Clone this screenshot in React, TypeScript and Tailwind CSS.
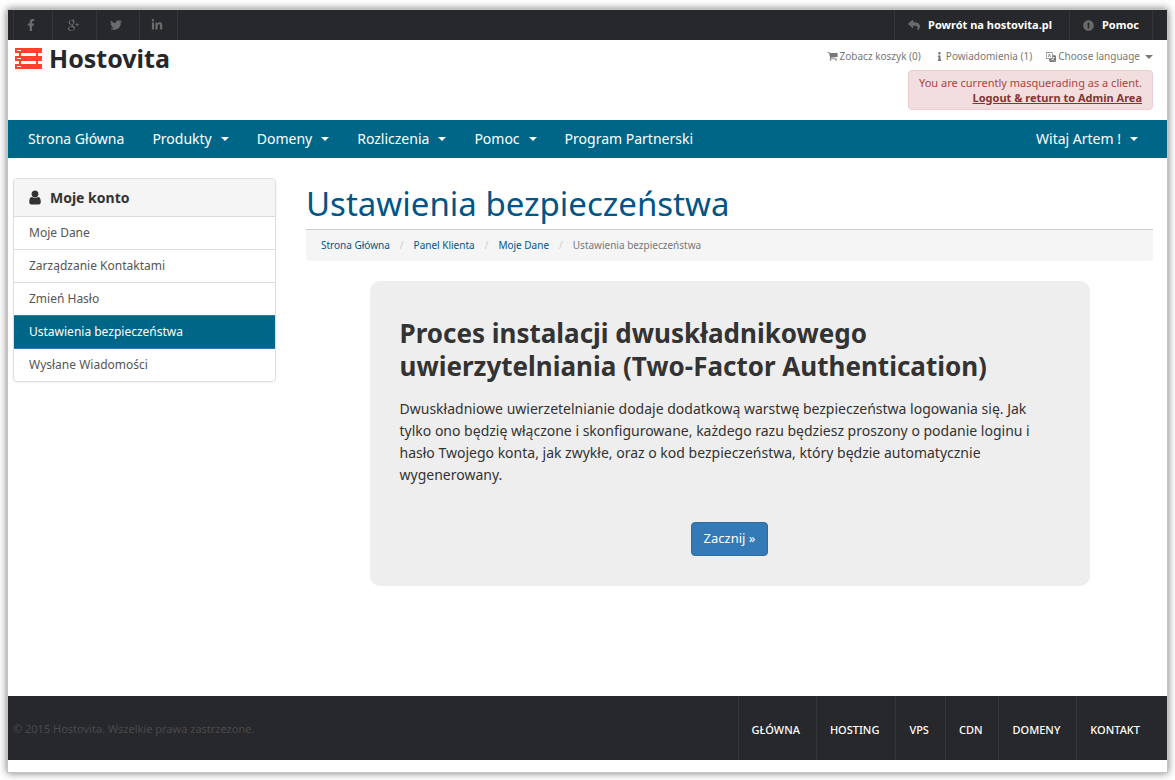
import type { ReactNode } from "react";
import { BsTranslate } from "react-icons/bs";
import {
  FaExclamationCircle,
  FaFacebookF,
  FaInfo,
  FaLinkedinIn,
  FaReply,
  FaTwitter,
} from "react-icons/fa";
import { TiSocialGooglePlus } from "react-icons/ti";

const SOCIAL = [
  { name: "Facebook", icon: <FaFacebookF size={12} />, width: "w-[39px]" },
  { name: "Google Plus", icon: <TiSocialGooglePlus size={18} />, width: "w-[44px]" },
  { name: "Twitter", icon: <FaTwitter size={12} />, width: "w-[43px]" },
  { name: "LinkedIn", icon: <FaLinkedinIn size={12} />, width: "w-[38px]" },
];

const NAV = [
  { label: "Strona Główna", menu: false },
  { label: "Produkty", menu: true },
  { label: "Domeny", menu: true },
  { label: "Rozliczenia", menu: true },
  { label: "Pomoc", menu: true },
  { label: "Program Partnerski", menu: false },
];

const ACCOUNT_LINKS = [
  "Moje Dane",
  "Zarządzanie Kontaktami",
  "Zmień Hasło",
  "Ustawienia bezpieczeństwa",
  "Wysłane Wiadomości",
];

const CRUMBS = ["Strona Główna", "Panel Klienta", "Moje Dane"];

const FOOTER_LINKS = ["Główna", "Hosting", "VPS", "CDN", "Domeny", "Kontakt"];

function Caret() {
  return (
    <span className="inline-block border-x-4 border-t-4 border-x-transparent border-t-current" />
  );
}

function UserIcon() {
  return (
    <svg width="12" height="15" viewBox="0 64 1280 1664" fill="currentColor" aria-hidden="true">
      <path d="M1280 1399q0 109-62.5 187t-150.5 78h-854q-88 0-150.5-78t-62.5-187q0-85 8.5-160.5t31.5-152 58.5-131 94-89 134.5-34.5q131 128 313 128t313-128q76 0 134.5 34.5t94 89 58.5 131 31.5 152 8.5 160.5zm-256-887q0 159-112.5 271.5t-271.5 112.5-271.5-112.5-112.5-271.5 112.5-271.5 271.5-112.5 271.5 112.5 112.5 271.5z" />
    </svg>
  );
}

function CartIcon() {
  return (
    <svg width="11" height="11" viewBox="0 128 1792 1664" fill="currentColor" aria-hidden="true">
      <circle cx="576" cy="1536" r="128" />
      <circle cx="1472" cy="1536" r="128" />
      <path d="M1728 448v512q0 24-16.5 42.5t-40.5 21.5l-1044 122q13 60 13 70 0 16-24 64h920q26 0 45 19t19 45-19 45-45 19h-1024q-26 0-45-19t-19-45q0-11 8-31.5t16-36 21.5-40 15.5-29.5l-177-823h-204q-26 0-45-19t-19-45 19-45 45-19h256q16 0 28.5 6.5t19.5 15.5 13 24.5 8 26 5.5 29.5 4.5 26h1201q26 0 45 19t19 45z" />
    </svg>
  );
}

function NavItem({ label, menu }: { label: string; menu: boolean }) {
  const cls = "flex items-center gap-[9px] px-[14px] text-[14px] leading-[38px] text-white";
  if (!menu) {
    return (
      <a href="#" className={cls}>
        {label}
      </a>
    );
  }
  return (
    <button type="button" aria-haspopup="true" className={cls}>
      {label}
      <Caret />
    </button>
  );
}

function TopLink({ icon, children }: { icon: ReactNode; children: ReactNode }) {
  return (
    <a
      href="#"
      className="flex items-center gap-2 border-l border-[#35363a] px-[13px] text-[11px] font-bold text-white"
    >
      <span className="text-[#6b6b6b]">{icon}</span>
      {children}
    </a>
  );
}

function Logo() {
  return (
    <a href="#" className="flex items-center gap-[7px] text-[#27272a]">
      <svg width="27" height="21" viewBox="0 0 27 21" aria-hidden="true">
        <g fill="#ff4229">
          <path d="M0 0h27v5H0zM0 8h27v5H0zM0 16h27v5H0z" />
          <path d="M4 5h2v3H4zM21 5h2v3h-2zM4 13h2v3H4zM21 13h2v3h-2z" />
        </g>
        <path fill="#fff" d="M2 2h4v1H2zM2 10h4v1H2zM2 18h4v1H2z" />
      </svg>
      <span className="text-[25px] leading-9 font-bold">Hostovita</span>
    </a>
  );
}

function TopBar() {
  return (
    <div className="flex h-[30px] justify-between bg-[#27282c] pr-[14px] pl-[5px]">
      <div className="flex border-l border-[#35363a]">
        {SOCIAL.map((s) => (
          <a
            key={s.name}
            href="#"
            aria-label={s.name}
            className={`flex items-center justify-center border-r border-[#35363a] pr-1 text-[#6b6b6b] ${s.width}`}
          >
            {s.icon}
          </a>
        ))}
      </div>
      <div className="flex gap-1 border-r border-[#35363a]">
        <TopLink icon={<FaReply size={12} />}>Powrót na hostovita.pl</TopLink>
        <TopLink icon={<FaExclamationCircle size={11} />}>Pomoc</TopLink>
      </div>
    </div>
  );
}

function Header() {
  return (
    <header className="flex h-20 justify-between pr-[14px] pl-[7px]">
      <div>
        <Logo />
      </div>
      <div className="flex flex-col items-end">
        <div className="flex h-[30px] items-center gap-[14px] pt-[3px] text-[10px] text-[#777]">
          <a href="#" className="flex items-center gap-[2px]">
            <CartIcon />
            Zobacz koszyk (0)
          </a>
          <button type="button" className="flex items-center gap-[2px]">
            <FaInfo size={9} />
            Powiadomienia (1)
          </button>
          <button type="button" aria-haspopup="true" className="flex items-center gap-[2px]">
            <BsTranslate size={10} />
            Choose language
            <span className="ml-[3px] flex">
              <Caret />
            </span>
          </button>
        </div>
        <div className="rounded border border-[#ebccd1] bg-[#f2dede] px-[10px] py-[4px] text-right text-[11px] leading-[15px] text-[#a94442]">
          You are currently masquerading as a client.
          <br />
          <a href="#" className="font-bold text-[#843534] underline">
            Logout &amp; return to Admin Area
          </a>
        </div>
      </div>
    </header>
  );
}

function Sidebar() {
  return (
    <aside className="w-[263px] shrink-0">
      <div className="overflow-hidden rounded border border-[#ddd] shadow-xs">
        <h2 className="flex h-[38px] items-center gap-[9px] border-b border-[#ddd] bg-[#f5f5f5] px-[15px] text-[14px] font-bold text-[#333]">
          <UserIcon />
          Moje konto
        </h2>
        <ul className="divide-y divide-[#ddd] text-[12px] leading-8">
          {ACCOUNT_LINKS.map((label) => (
            <li key={label}>
              <a
                href="#"
                className={
                  label === "Ustawienia bezpieczeństwa"
                    ? "relative -my-px block border-y border-[#337ab7] bg-[#006687] px-[15px] text-white"
                    : "block px-[15px] text-[#555]"
                }
              >
                {label}
              </a>
            </li>
          ))}
        </ul>
      </div>
    </aside>
  );
}

function Footer() {
  return (
    <footer className="mt-auto flex h-16 items-stretch justify-between bg-[#27282c] pr-[14px] pl-[5px]">
      <p className="self-center pt-[2px] text-[11px] text-[#48494d]">
        © 2015 Hostovita. Wszelkie prawa zastrzezone.
      </p>
      <nav className="flex gap-[3px]" aria-label="Stopka">
        {FOOTER_LINKS.map((label) => (
          <a
            key={label}
            href="#"
            className="flex items-center border-l border-[#35363a] px-[13px] pt-1 text-[11px] font-medium text-white uppercase"
          >
            {label}
          </a>
        ))}
      </nav>
    </footer>
  );
}

export default function App() {
  return (
    <div className="flex min-h-screen flex-col bg-white px-2 pt-[10px] pb-2 font-['Noto_Sans',sans-serif]">
      <div className="flex grow flex-col bg-white pb-3 shadow-[0_0_0_1px_#c4c4c4,0_0_8px_1px_#777]">
        <TopBar />
        <Header />
        <nav className="flex justify-between bg-[#006687] pr-[15px] pl-[6px]" aria-label="Menu">
          <div className="flex">
            {NAV.map((item) => (
              <NavItem key={item.label} {...item} />
            ))}
          </div>
          <NavItem label="Witaj Artem !" menu />
        </nav>

        <div className="flex gap-[30px] pt-5 pr-[14px] pb-10 pl-[5px]">
          <Sidebar />
          <main className="min-w-0 grow">
            <h1 className="border-b border-[#ccc] pt-[3px] pb-[2px] text-[33px] leading-[46px] text-[#058]">
              Ustawienia bezpieczeństwa
            </h1>
            <nav
              aria-label="Okruszki"
              className="flex h-[31px] items-center rounded-b bg-[#f5f5f5] px-[15px] text-[10px] text-[#777]"
            >
              {CRUMBS.map((crumb) => (
                <span key={crumb}>
                  <a href="#" className="text-[#058]">
                    {crumb}
                  </a>
                  <span className="px-[10px] text-[#ccc]">/</span>
                </span>
              ))}
              <span>Ustawienia bezpieczeństwa</span>
            </nav>

            <section className="mx-auto mt-5 max-w-[720px] rounded-[10px] bg-[#eee] p-[30px] text-[#333]">
              <h2 className="pt-[6px] text-[26px] leading-[33px] font-bold">
                Proces instalacji dwuskładnikowego uwierzytelniania (Two-Factor Authentication)
              </h2>
              <p className="mt-[15px] text-[14px] leading-[22px]">
                Dwuskładniowe uwierzetelnianie dodaje dodatkową warstwę bezpieczeństwa logowania
                się. Jak tylko ono będzię włączone i skonfigurowane, każdego razu będziesz proszony
                o podanie loginu i hasło Twojego konta, jak zwykłe, oraz o kod bezpieczeństwa,
                który będzie automatycznie wygenerowany.
              </p>
              <div className="mt-9 text-center">
                <button
                  type="button"
                  className="h-[34px] rounded border border-[#2e6da4] bg-[#337ab7] px-3 text-[13px] text-white"
                >
                  Zacznij »
                </button>
              </div>
            </section>
          </main>
        </div>

        <Footer />
      </div>
    </div>
  );
}
